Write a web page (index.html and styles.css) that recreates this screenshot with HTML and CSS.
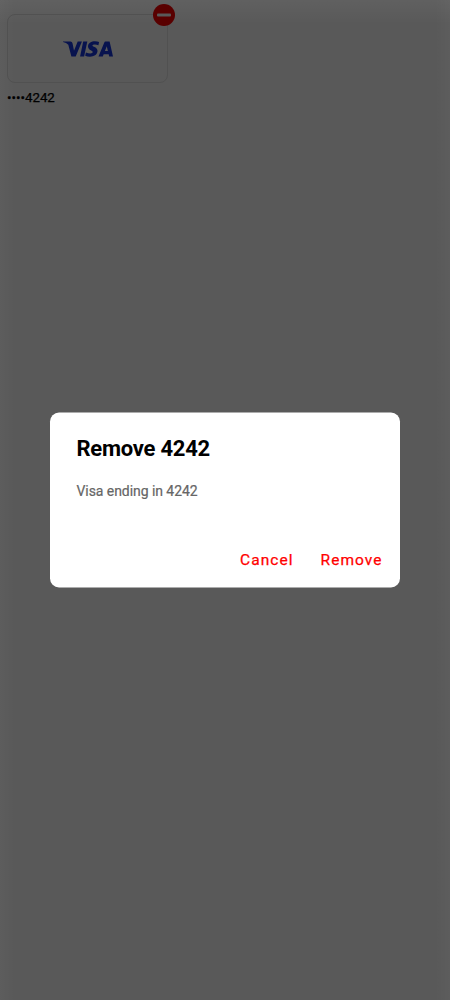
FILE: index.html
```html
<!DOCTYPE html>
<html lang="en">
<head>
<meta charset="utf-8">
<title>Remove card</title>
<link rel="stylesheet" href="styles.css">
</head>
<body>
<main class="screen">
  <section class="payment">
    <div class="card">
      <svg class="visa" viewBox="0 0 50 16" role="img" aria-label="Visa">
        <path d="M0 .5H7.4Q9.1.5 9.5 2.2L11 9.8 14.7.5H18.9L12.7 15.4H8.4L5.3 3.7Q3.4 1.6 0 1Z"/>
        <path d="M20.2.5H24.3L21.1 15.4H17.1Z"/>
        <path d="M36.1 1 35.4 4.3Q33.6 3.4 31.6 3.5 29.5 3.6 29.4 4.6C29.4 6 34.7 6.1 34.5 10.1 34.3 13.8 30.8 15.7 27 15.7Q24.3 15.7 22.2 14.8L22.9 11.4Q25.1 12.4 27.4 12.4 29.7 12.3 29.8 11C29.8 9.4 24.8 9.2 25 5.2 25.2 2 28.4.2 32 .2Q34.3.2 36.1 1Z"/>
        <path fill-rule="evenodd" d="M42.4.5H46.6L50 15.4H46.2L45.7 13.2H40.7L39.8 15.4H35.5L41.2 1.7Q41.6.5 42.4.5ZM43.8 5.2 41.9 10.1H44.9Z"/>
      </svg>
      <svg class="remove-badge" viewBox="0 0 22 22" aria-hidden="true">
        <circle cx="11" cy="11" r="11"/>
        <rect x="4" y="9.6" width="14" height="2.8" rx="1"/>
      </svg>
    </div>
    <div class="number">••••4242</div>
  </section>
</main>
<div class="backdrop">
  <div class="dialog" role="dialog" aria-labelledby="title">
    <h1 class="title" id="title">Remove 4242</h1>
    <p class="message">Visa ending in 4242</p>
    <div class="actions">
      <button class="action">Cancel</button>
      <button class="action">Remove</button>
    </div>
  </div>
</div>
</body>
</html>
```
FILE: styles.css
```css
* { box-sizing: border-box; }
body {
  margin: 0;
  height: 1000px;
  overflow: hidden;
  font-family: Roboto, sans-serif;
  background: #595959;
}
.screen {
  height: 1000px;
  padding: 14px 7px;
  background:
    linear-gradient(to bottom, rgba(255,255,255,.045), transparent 24px),
    linear-gradient(to right, rgba(255,255,255,.025), transparent 15px),
    linear-gradient(to left, rgba(255,255,255,.025), transparent 15px),
    #595959;
}
.card {
  position: relative;
  display: flex;
  align-items: center;
  justify-content: center;
  width: 161px;
  height: 69px;
  border: 1px solid #515151;
  border-radius: 8px;
}
.visa {
  width: 50px;
  height: 16px;
  fill: #08134e;
}
.remove-badge {
  position: absolute;
  top: -11px;
  right: -8px;
  width: 22px;
  height: 22px;
  fill: #590000;
}
.remove-badge rect { fill: #595959; }
.number {
  margin-top: 7px;
  font-size: 13.3px;
  font-weight: 400;
  line-height: 16px;
  color: #000;
  -webkit-text-stroke: .25px #000;
}
.backdrop {
  position: fixed;
  inset: 0;
  display: flex;
  justify-content: center;
  align-items: flex-start;
  padding-top: 412px;
}
.dialog {
  display: flex;
  flex-direction: column;
  width: 350px;
  height: 175px;
  padding: 23px 18px 18px 26.5px;
  border-radius: 9px;
  background: #fff;
  transform: translateY(.5px);
}
.title {
  margin: 0;
  font-size: 22px;
  font-weight: 700;
  line-height: 26px;
  letter-spacing: -.25px;
  color: #000;
}
.message {
  margin: 20px 0 0;
  font-size: 14px;
  line-height: 18px;
  letter-spacing: -.06px;
  color: #666;
  -webkit-text-stroke: .2px #666;
}
.actions {
  display: flex;
  justify-content: flex-end;
  gap: 27px;
  margin-top: auto;
}
.action {
  padding: 0;
  border: 0;
  background: none;
  font: 400 15.5px/20px Roboto, sans-serif;
  letter-spacing: 1.05px;
  color: #f00;
  -webkit-text-stroke: .25px #f00;
}
.action:last-child { margin-right: -.6px; }
```
